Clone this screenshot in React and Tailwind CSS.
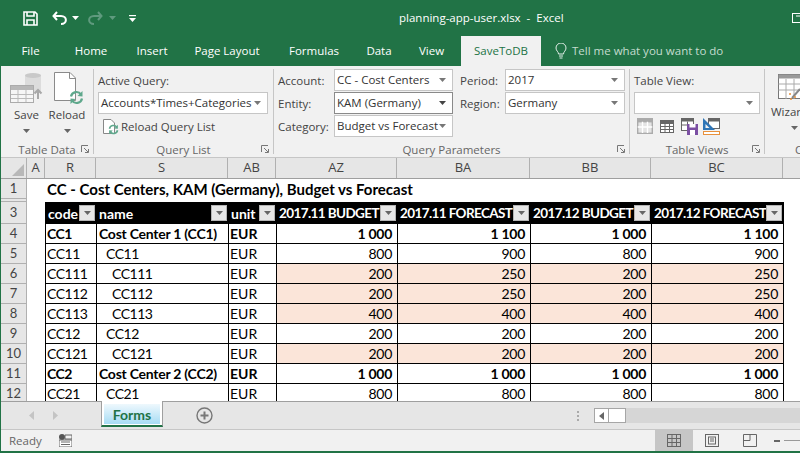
import React from "react";

const columns = [
  { name: "R", w: "w-[51px]" },
  { name: "S", w: "w-[132px]" },
  { name: "AB", w: "w-[48px]" },
  { name: "AZ", w: "w-[121px]" },
  { name: "BA", w: "w-[133px]" },
  { name: "BB", w: "w-[121px]" },
  { name: "BC", w: "w-[132px]" },
];

const rows = [
  { n: 4, code: "CC1", name: "Cost Center 1 (CC1)", vals: ["1 000", "1 100", "1 000", "1 100"], bold: true },
  { n: 5, code: "CC11", name: "CC11", level: 1, vals: ["800", "900", "800", "900"] },
  { n: 6, code: "CC111", name: "CC111", level: 2, vals: ["200", "250", "200", "250"], pink: true },
  { n: 7, code: "CC112", name: "CC112", level: 2, vals: ["200", "250", "200", "250"], pink: true },
  { n: 8, code: "CC113", name: "CC113", level: 2, vals: ["400", "400", "400", "400"], pink: true },
  { n: 9, code: "CC12", name: "CC12", level: 1, vals: ["200", "200", "200", "200"] },
  { n: 10, code: "CC121", name: "CC121", level: 2, vals: ["200", "200", "200", "200"], pink: true },
  { n: 11, code: "CC2", name: "Cost Center 2 (CC2)", vals: ["1 000", "1 000", "1 000", "1 000"], bold: true },
  { n: 12, code: "CC21", name: "CC21", level: 1, vals: ["800", "800", "800", "800"] },
];

function Caret({ className = "" }) {
  return (
    <svg width="7" height="4" viewBox="0 0 7 4" className={`shrink-0 ${className}`}>
      <polygon points="0,0 7,0 3.5,4" fill="currentColor" />
    </svg>
  );
}

function Launcher() {
  return (
    <svg width="8" height="8" viewBox="0 0 8 8" className="absolute right-[4px] bottom-[1px] text-[#777]" fill="none" stroke="currentColor">
      <path d="M0.5 7V0.5H7" />
      <path d="M3 3L7 7M4 7.5H7.5V4" />
    </svg>
  );
}

function Group({ label, w, border = true, launcher = true, labelClass = "text-center", children }) {
  return (
    <div className={`${w} shrink-0 h-[85px] flex flex-col relative ${border ? "border-r border-[#c6c6c6]" : ""}`}>
      <div className="h-[74px] shrink-0">{children}</div>
      <div className={`${labelClass} text-[11.5px] leading-[14px] text-[#666]`}>{label}</div>
      {launcher && <Launcher />}
    </div>
  );
}

function Combo({ value, w, dark }) {
  return (
    <div className={`${w} h-[22px] shrink-0 bg-white border ${dark ? "border-[#8a8a8a]" : "border-[#c6c6c6]"} flex items-center justify-between pl-[2px] pr-[6px] text-[11.5px] text-[#333] whitespace-nowrap`}>
      <span>{value}</span>
      <Caret className={dark ? "text-[#444]" : "text-[#777]"} />
    </div>
  );
}

function Param({ label, lw, value, w, dark }) {
  return (
    <div className="flex items-center h-[22px]">
      <span className={`${lw} shrink-0 text-[11.5px] text-[#444] pt-[1px]`}>{label}</span>
      <Combo value={value} w={w} dark={dark} />
    </div>
  );
}

function RefreshArrows({ size = 15 }) {
  return (
    <svg width={size} height={size} viewBox="0 0 15 15" fill="none" stroke="#5fa88c" strokeWidth="2.2">
      <path d="M2 6.5A5.5 5.5 0 0 1 12 4.5" />
      <polygon points="13.5,1 13.5,6.5 8.5,6" fill="#5fa88c" stroke="none" />
      <path d="M13 8.5A5.5 5.5 0 0 1 3 10.5" />
      <polygon points="1.5,14 1.5,8.5 6.5,9" fill="#5fa88c" stroke="none" />
    </svg>
  );
}

function SaveIcon() {
  return (
    <svg width="33" height="32" viewBox="0 0 33 32" fill="none">
      <path d="M15 3.5C15 1 31 1 31 3.5V21H15Z" fill="#dcdcdc" />
      <ellipse cx="23" cy="3.5" rx="8" ry="2.5" fill="#c9c9c9" />
      <rect x="0.5" y="13.5" width="23" height="17" fill="#f6f6f6" stroke="#ababab" />
      <rect x="1" y="14" width="22" height="4" fill="#b8b8b8" />
      <path d="M1 22.5H23M1 26.5H23M8 18V30M16 18V30" stroke="#bbb" />
      <path d="M28 27V18M24.5 21.5L28 18L31.5 21.5" stroke="#a8a8a8" strokeWidth="2" />
    </svg>
  );
}

function ReloadIcon() {
  return (
    <div className="relative w-[30px] h-[33px]">
      <svg width="24" height="30" viewBox="0 0 24 30" fill="#fff" stroke="#8a8a8a">
        <path d="M0.5 0.5H16L21.5 6V28.5H0.5Z" />
        <path d="M15.5 0.5V6.5H21.5" fill="none" />
      </svg>
      <div className="absolute right-0 bottom-0">
        <RefreshArrows />
      </div>
    </div>
  );
}

function FilterBtn() {
  return (
    <span className="w-[16px] h-[16px] shrink-0 bg-[#e7e7e7] border border-[#b5b5b5] flex items-center justify-center text-[#666]">
      <Caret />
    </span>
  );
}

function HeadCell({ w, title, caps }) {
  return (
    <div className={`${w} shrink-0 flex items-center justify-between pl-[2px] pr-[2px] font-bold text-white whitespace-nowrap overflow-hidden ${caps ? "text-[13.5px] tracking-[-0.6px]" : "text-[14px]"}`}>
      <span>{title}</span>
      <FilterBtn />
    </div>
  );
}

function RowHead({ n, h }) {
  return (
    <div className={`w-[26px] ${h} shrink-0 bg-[#e6e6e6] border-r border-b border-[#b0b0b0] flex items-center justify-center text-[13px] text-[#444]`}>
      {n}
    </div>
  );
}

function DataRow({ row }) {
  const text = row.bold ? "font-bold" : "";
  const fill = row.pink ? "bg-[#fbe5d9]" : "bg-white";
  const indent = row.level === 1 ? "pl-[9px] tracking-[-0.5px]" : row.level === 2 ? "pl-[15px] tracking-[-0.5px]" : "pl-[2px] tracking-[-0.25px]";
  return (
    <div className="flex h-[20px] shrink-0 text-[14px] text-black">
      <RowHead n={row.n} h="h-[20px]" />
      <div className="w-[18px] shrink-0 bg-white" />
      <div className={`flex border-l border-b border-black ${text}`}>
        <div className="w-[51px] border-r border-black pl-[1px] flex items-center tracking-[-0.5px]">{row.code}</div>
        <div className={`w-[132px] border-r border-black flex items-center whitespace-nowrap ${indent}`}>{row.name}</div>
        <div className="w-[48px] border-r border-black pl-[1px] flex items-center">EUR</div>
        {row.vals.map((v, i) => (
          <div key={i} className={`${columns[i + 3].w} border-r border-black ${fill} flex items-center justify-end pr-[5px] tracking-[-0.3px]`}>{v}</div>
        ))}
      </div>
    </div>
  );
}

export default function App() {
  return (
    <div className="w-[800px] h-[453px] overflow-hidden flex flex-col bg-[#f1f1f1] border-l border-b-2 border-[#217346] font-['Open_Sans',sans-serif]">
      {/* title bar */}
      <div className="h-[36px] shrink-0 bg-[#217346] flex items-center text-white">
        <div className="w-[398px] shrink-0 flex items-center pl-[22px]">
          <svg width="15" height="15" viewBox="0 0 15 15" fill="none" stroke="#fff" strokeWidth="1.6">
            <path d="M1 1H12L14 3V14H1Z" />
            <path d="M4 1V5H11V1" />
            <path d="M4 14V9H11V14" />
          </svg>
          <svg width="15" height="14" viewBox="0 0 15 14" fill="none" stroke="#fff" strokeWidth="2" className="ml-[14px]">
            <path d="M5 1L1.5 5L5 9" />
            <path d="M2 5H9C15.5 5 15.5 13 9 13" />
          </svg>
          <Caret className="ml-[5px] text-white" />
          <svg width="15" height="14" viewBox="0 0 15 14" fill="none" stroke="#5f9a7e" strokeWidth="2" className="ml-[9px]">
            <path d="M10 1L13.5 5L10 9" />
            <path d="M13 5H6C-0.5 5 -0.5 13 6 13" />
          </svg>
          <Caret className="ml-[6px] text-[#5f9a7e]" />
          <svg width="7" height="7" viewBox="0 0 7 7" className="ml-[13px]" fill="#fff">
            <rect x="0" y="0" width="7" height="1.2" />
            <polygon points="0,3 7,3 3.5,7" />
          </svg>
        </div>
        <span className="text-[11.5px] whitespace-pre">planning-app-user.xlsx  -  Excel</span>
        <div className="flex-1" />
        <svg width="8" height="10" viewBox="0 0 8 10" fill="none" stroke="#fff">
          <rect x="0.5" y="0.5" width="12" height="9" />
          <path d="M4 3H8" />
        </svg>
      </div>

      {/* ribbon tabs */}
      <div className="h-[30px] shrink-0 bg-[#217346] flex items-center text-[11.5px] text-white">
        <div className="w-[59px] text-center">File</div>
        <div className="w-[62px] text-center">Home</div>
        <div className="w-[60px] text-center">Insert</div>
        <div className="w-[90px] text-center">Page Layout</div>
        <div className="w-[84px] text-center">Formulas</div>
        <div className="w-[46px] text-center">Data</div>
        <div className="w-[59px] text-center">View</div>
        <div className="w-[80px] h-full bg-[#f1f1f1] text-[#217346] flex items-center justify-center">SaveToDB</div>
        <div className="flex items-center ml-[14px] text-[#c4dccf]">
          <svg width="12" height="16" viewBox="0 0 12 16" fill="none" stroke="#e3efe9" strokeWidth="1">
            <path d="M3.5 11C3.5 8.5 1 8 1 5A5 5 0 0 1 11 5C11 8 8.5 8.5 8.5 11Z" />
            <path d="M4 13H8M4.5 15H7.5" />
          </svg>
          <span className="ml-[5px]">Tell me what you want to do</span>
        </div>
      </div>

      {/* ribbon */}
      <div className="h-[92px] shrink-0 bg-[#f1f1f1] border-b border-[#c6c6c6] pt-[3px] flex">
        <Group label="Table Data" w="w-[93px]">
          <div className="flex pl-[5px] text-[11.5px] text-[#444]">
            <div className="w-[41px] flex flex-col items-center">
              <div className="h-[35px] mt-[3px] pl-[4px] w-full"><SaveIcon /></div>
              <span className="leading-[16px]">Save</span>
              <Caret className="mt-[6px] text-[#666]" />
            </div>
            <div className="w-[40px] flex flex-col items-center">
              <div className="h-[35px] mt-[3px] pl-[7px] w-full"><ReloadIcon /></div>
              <span className="leading-[16px]">Reload</span>
              <Caret className="mt-[6px] text-[#666]" />
            </div>
          </div>
        </Group>
        <Group label="Query List" w="w-[180px]">
          <div className="pl-[4px] flex flex-col gap-[1px] text-[11.5px] text-[#444]">
            <div className="h-[22px] flex items-center pt-[2px]">Active Query:</div>
            <Combo value="Accounts*Times+Categories" w="w-[170px]" />
            <div className="h-[23px] flex items-center pl-[5px]">
              <div className="relative w-[15px] h-[15px]">
                <svg width="12" height="15" viewBox="0 0 12 15" fill="#fff" stroke="#888">
                  <path d="M0.5 0.5H8L11.5 4V14.5H0.5Z" />
                </svg>
                <div className="absolute right-[-1px] bottom-[-1px]"><RefreshArrows size={11} /></div>
              </div>
              <span className="ml-[3px]">Reload Query List</span>
            </div>
          </div>
        </Group>
        <Group label="Query Parameters" w="w-[356px]">
          <div className="flex pl-[4px] gap-[7px]">
            <div className="flex flex-col gap-[1px]">
              <Param label="Account:" lw="w-[56px]" value="CC - Cost Centers" w="w-[119px]" />
              <Param label="Entity:" lw="w-[56px]" value="KAM (Germany)" w="w-[119px]" dark />
              <Param label="Category:" lw="w-[56px]" value="Budget vs Forecast" w="w-[119px]" />
            </div>
            <div className="flex flex-col gap-[1px]">
              <Param label="Period:" lw="w-[45px]" value="2017" w="w-[120px]" />
              <Param label="Region:" lw="w-[45px]" value="Germany" w="w-[120px]" />
            </div>
          </div>
        </Group>
        <Group label="Table Views" w="w-[135px]">
          <div className="pl-[4px] flex flex-col gap-[1px] text-[11.5px] text-[#444]">
            <div className="h-[22px] flex items-center pt-[2px]">Table View:</div>
            <Combo value="" w="w-[126px]" />
            <div className="flex items-start pl-[3px] pt-[3px]">
              <svg width="16" height="16" viewBox="0 0 16 16" fill="#e4e4e4" stroke="#ababab" strokeWidth="1.4">
                <rect x="0.7" y="0.7" width="14.6" height="14.6" />
                <rect x="0.7" y="0.7" width="14.6" height="3" fill="#ababab" />
                <path d="M0.7 9H15.3M5.5 3.7V15M10.5 3.7V15" fill="none" stroke="#fff" />
              </svg>
              <svg width="14" height="13" viewBox="0 0 14 13" fill="#fff" stroke="#666" className="ml-[7px] mt-[2px]">
                <rect x="0.5" y="0.5" width="13" height="12" />
                <rect x="0.5" y="0.5" width="13" height="3" fill="#666" />
                <path d="M0.5 6.5H13.5M0.5 9.5H13.5M5 3.5V12.5M9.5 3.5V12.5" fill="none" />
              </svg>
              <svg width="17" height="17" viewBox="0 0 17 17" className="ml-[7px]">
                <rect x="0.5" y="0.5" width="12" height="12" fill="#fff" stroke="#666" />
                <rect x="0.5" y="0.5" width="12" height="3" fill="#666" />
                <path d="M0.5 7H12.5M6.5 3.5V12.5" stroke="#666" />
                <rect x="6" y="6" width="11" height="11" fill="#7b4fa3" />
                <rect x="8.5" y="6" width="6" height="3.5" fill="#fff" />
                <rect x="9" y="12" width="5" height="5" fill="#fff" />
              </svg>
              <svg width="17" height="17" viewBox="0 0 17 17" className="ml-[5px]">
                <rect x="5.5" y="0.5" width="11" height="10" fill="#fff" stroke="#666" />
                <rect x="5.5" y="0.5" width="11" height="3" fill="#666" />
                <polygon points="0,0 0,12 12,12" fill="#2e75b6" />
                <polygon points="2.5,6 2.5,10 6.5,10" fill="#f1f1f1" />
                <rect x="0.5" y="13.5" width="16" height="3" fill="#fff" stroke="#e8913c" />
              </svg>
            </div>
          </div>
        </Group>
        <Group label="C" w="w-[40px]" border={false} launcher={false} labelClass="pl-[30px]">
          <div className="pl-[6px] flex flex-col text-[11.5px] text-[#444]">
            <svg width="26" height="27" viewBox="0 0 26 27" className="mt-[5px] ml-[7px]">
              <rect x="0.5" y="0.5" width="25" height="24" fill="#fff" stroke="#777" />
              <rect x="0.5" y="0.5" width="25" height="4" fill="#999" />
              <path d="M0.5 10H25.5M0.5 16H25.5M8 5V25M16 5V25" fill="none" stroke="#aaa" />
              <path d="M14 24L22 15" stroke="#888" strokeWidth="2" />
              <path d="M11 20H13M16 23H18M12 25H14" stroke="#e8913c" strokeWidth="1.5" />
            </svg>
            <span className="leading-[16px] mt-[3px] whitespace-nowrap">Wizards</span>
            <Caret className="mt-[6px] ml-[20px] text-[#666]" />
          </div>
        </Group>
      </div>

      {/* column headers */}
      <div className="h-[21px] shrink-0 flex bg-[#e6e6e6] border-b border-[#9f9f9f] text-[13px] text-[#444]">
        <div className="w-[26px] shrink-0 border-r border-[#b0b0b0] flex items-end justify-end p-[2px]">
          <svg width="12" height="12" viewBox="0 0 12 12"><polygon points="12,0 12,12 0,12" fill="#b8b8b8" /></svg>
        </div>
        <div className="w-[18px] shrink-0 border-r border-[#b0b0b0] flex items-center justify-center">A</div>
        {columns.map((c) => (
          <div key={c.name} className={`${c.w} shrink-0 border-r border-[#b0b0b0] flex items-center justify-center`}>{c.name}</div>
        ))}
      </div>

      {/* sheet */}
      <div className="h-[223px] shrink-0 overflow-hidden bg-white border-b border-[#9f9f9f] font-['Lato',sans-serif] flex flex-col">
        <div className="flex h-[20px] shrink-0">
          <RowHead n={1} h="h-[20px]" />
          <div className="pl-[20px] flex items-center font-bold text-[15px] text-black whitespace-nowrap">CC - Cost Centers, KAM (Germany), Budget vs Forecast</div>
        </div>
        <div className="flex h-[3px] shrink-0"><RowHead h="h-[3px]" /></div>
        <div className="flex h-[22px] shrink-0">
          <RowHead n={3} h="h-[22px]" />
          <div className="w-[18px] shrink-0" />
          <div className="flex bg-black border-l border-black">
            <HeadCell w="w-[51px]" title="code" />
            <HeadCell w="w-[132px]" title="name" />
            <HeadCell w="w-[48px]" title="unit" />
            <HeadCell w="w-[121px]" title="2017.11 BUDGET" caps />
            <HeadCell w="w-[133px]" title="2017.11 FORECAST" caps />
            <HeadCell w="w-[121px]" title="2017.12 BUDGET" caps />
            <HeadCell w="w-[132px]" title="2017.12 FORECAST" caps />
          </div>
        </div>
        {rows.map((r) => <DataRow key={r.n} row={r} />)}
      </div>

      {/* sheet tabs */}
      <div className="h-[28px] shrink-0 flex bg-[#e6e6e6] border-b border-[#c6c6c6]">
        <div className="w-[100px] shrink-0 flex items-center gap-[19px] pl-[28px] text-[#c4c4c4]">
          <svg width="5" height="9" viewBox="0 0 5 9"><polygon points="5,0 5,9 0,4.5" fill="currentColor" /></svg>
          <svg width="5" height="9" viewBox="0 0 5 9"><polygon points="0,0 0,9 5,4.5" fill="currentColor" /></svg>
        </div>
        <div className="w-[62px] shrink-0 h-[26px] mt-[-1px] bg-white border-x border-[#9f9f9f] border-b-2 border-b-[#217346] px-[2px] pt-[3px] pb-[1px]">
          <div className="h-full bg-linear-to-b from-[#eef8fd] to-[#a6dcf4] flex items-center justify-center text-[#217346] font-bold text-[14px] font-['Lato',sans-serif]">Forms</div>
        </div>
        <div className="ml-[33px] flex items-center">
          <svg width="17" height="17" viewBox="0 0 17 17" fill="none" stroke="#777" strokeWidth="1.4">
            <circle cx="8.5" cy="8.5" r="7.5" />
            <path d="M8.5 4.5V12.5M4.5 8.5H12.5" strokeWidth="2" />
          </svg>
        </div>
        <div className="flex-1 flex items-center justify-end">
          <div className="w-[2px] h-[10px] mr-[15px] border-y-2 border-[#aaa] flex items-center"><span className="w-[2px] h-[2px] bg-[#aaa]" /></div>
          <div className="w-[206px] h-[15px] bg-[#d6d6d6] flex">
            <div className="w-[15px] bg-white border border-[#a6a6a6] flex items-center justify-center">
              <svg width="5" height="8" viewBox="0 0 5 8"><polygon points="5,0 5,8 0,4" fill="#666" /></svg>
            </div>
            <div className="w-[17px] bg-white border border-l-0 border-[#a6a6a6]" />
          </div>
        </div>
      </div>

      {/* status bar */}
      <div className="flex-1 flex items-center bg-[#f1f1f1] text-[11.5px] text-[#666]">
        <span className="ml-[8px] w-[50px]">Ready</span>
        <svg width="13" height="13" viewBox="0 0 13 13">
          <circle cx="3" cy="3" r="3" fill="#555" />
          <rect x="0" y="6" width="13" height="7" fill="#fff" stroke="#666" />
          <path d="M6 1H13V5H6ZM2 8H11M2 10.5H11" stroke="#666" fill="none" />
        </svg>
        <div className="flex-1" />
        <div className="w-[38px] h-full bg-[#c6c6c6] flex items-center justify-center">
          <svg width="14" height="13" viewBox="0 0 14 13" fill="none" stroke="#666"><rect x="0.5" y="0.5" width="13" height="12" /><path d="M0.5 4.5H13.5M0.5 8.5H13.5M5 0.5V12.5M9.5 0.5V12.5" /></svg>
        </div>
        <div className="w-[38px] flex items-center justify-center">
          <svg width="14" height="13" viewBox="0 0 14 13" fill="none" stroke="#666"><rect x="0.5" y="0.5" width="13" height="12" /><rect x="3.5" y="3" width="7" height="7" /><path d="M5 5H9M5 7H9" /></svg>
        </div>
        <div className="w-[38px] flex items-center justify-center">
          <svg width="14" height="13" viewBox="0 0 14 13" fill="none" stroke="#666"><path d="M0.5 0.5H13.5V12.5H0.5ZM7 0.5V6.5H0.5" /></svg>
        </div>
        <div className="ml-[5px] w-[6px] h-[2px] bg-[#666]" />
        <div className="ml-[4px] w-[16px] h-px bg-[#999]" />
      </div>
    </div>
  );
}
